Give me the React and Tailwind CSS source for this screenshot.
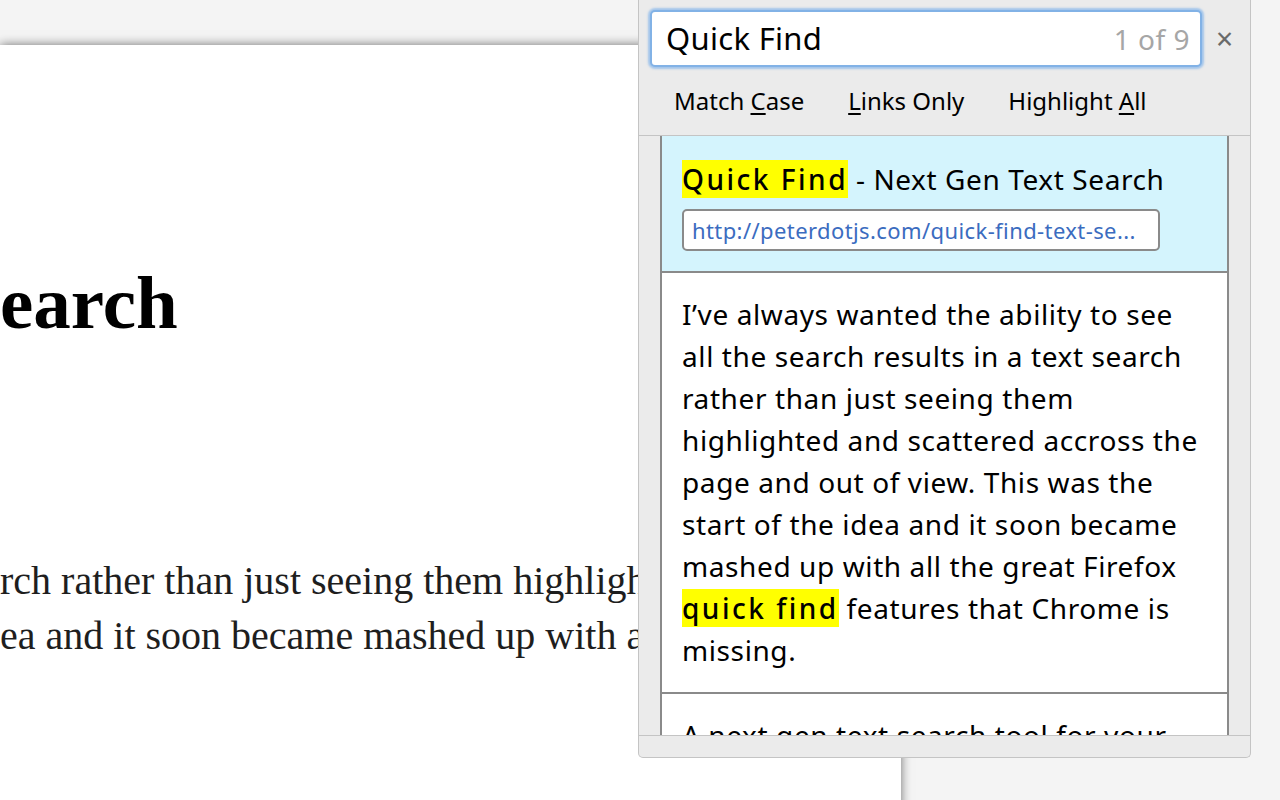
export default function App() {
  return (
    <div className="relative w-[1280px] h-[800px] overflow-hidden bg-[#f4f4f4]">
      {/* web page */}
      <div className="mt-[45px] w-[901px] h-[800px] bg-white shadow-[0_0_10px_rgba(0,0,0,0.55)] overflow-hidden">
        <div className="h-[218px]" />
        <div className="font-['Liberation_Serif',serif] font-bold text-[75px] leading-[80px] text-black whitespace-nowrap">
          earch
        </div>
        <div className="h-[210px]" />
        <div className="font-['Liberation_Serif',serif] text-[40px] leading-[55px] text-[#1e1e1e] whitespace-nowrap">
          <div>rch rather than just seeing them highlighted and scattered</div>
          <div>ea and it soon became mashed up with all the great Firefox</div>
        </div>
      </div>

      {/* quick find panel */}
      <div className="absolute left-[638px] top-0 w-[613px] h-[758px] bg-[#ebebeb] border border-t-0 border-[#c4c4c4] rounded-b-[5px] flex flex-col font-['Noto_Sans',sans-serif]">
        <div className="flex items-center pl-[11px] pt-[10px]">
          <div className="w-[552px] h-[57px] rounded-[5px] border-2 border-[#82b2e6] shadow-[0_0_2px_2px_rgba(140,185,235,0.75)] bg-white flex items-center pl-[14px] pr-[10px]">
            <span className="flex-1 text-[31px] text-black leading-none tracking-[0.3px]">Quick Find</span>
            <span className="text-[28px] text-[#a6a6a6] leading-none tracking-[0.5px]">1 of 9</span>
          </div>
          <span className="ml-[14px] text-[30px] leading-none text-[#6a6a6a]">×</span>
        </div>
        <div className="h-[68px] flex items-center pl-[35px] gap-[44px] text-[24px] text-black">
          <span>Match <span className="underline underline-offset-[3px] decoration-[2px]">C</span>ase</span>
          <span><span className="underline underline-offset-[3px] decoration-[2px]">L</span>inks Only</span>
          <span>Highlight <span className="underline underline-offset-[3px] decoration-[2px]">A</span>ll</span>
        </div>
        <div className="h-px bg-[#c4c4c4]" />
        <div className="mx-[21px] flex-1 overflow-hidden border-x-2 border-[#8a8a8a] bg-white text-[28px] leading-[42px] tracking-[0.6px] text-black">
          <div className="bg-[#d4f4fd] px-[20px] pt-[22px] pb-[20px] border-b-2 border-[#8a8a8a]">
            <div className="whitespace-nowrap">
              <span className="bg-[#ffff00] font-medium tracking-[2.5px]">Quick Find</span> - Next Gen Text Search
            </div>
            <div className="mt-[9px] w-[478px] h-[42px] rounded-[5px] border-2 border-[#8a8a8a] bg-white flex items-center px-[8px] overflow-hidden">
              <span className="text-[22px] leading-none text-[#3b6cbf] whitespace-nowrap tracking-[0.4px]">http://peterdotjs.com/quick-find-text-se...</span>
            </div>
          </div>
          <div className="px-[20px] pt-[20px] pb-[21px] border-b-2 border-[#8a8a8a]">
            I’ve always wanted the ability to see<br />
            all the search results in a text search<br />
            rather than just seeing them<br />
            highlighted and scattered accross the<br />
            page and out of view. This was the<br />
            start of the idea and it soon became<br />
            mashed up with all the great Firefox<br />
            <span className="bg-[#ffff00] font-medium tracking-[2.5px]">quick find</span> features that Chrome is<br />
            missing.
          </div>
          <div className="px-[20px] pt-[20px] pb-[20px]">
            A next gen text search tool for your<br />
            browser that lets you see every match.
          </div>
        </div>
        <div className="h-[22px] border-t border-[#c4c4c4]" />
      </div>
    </div>
  );
}
